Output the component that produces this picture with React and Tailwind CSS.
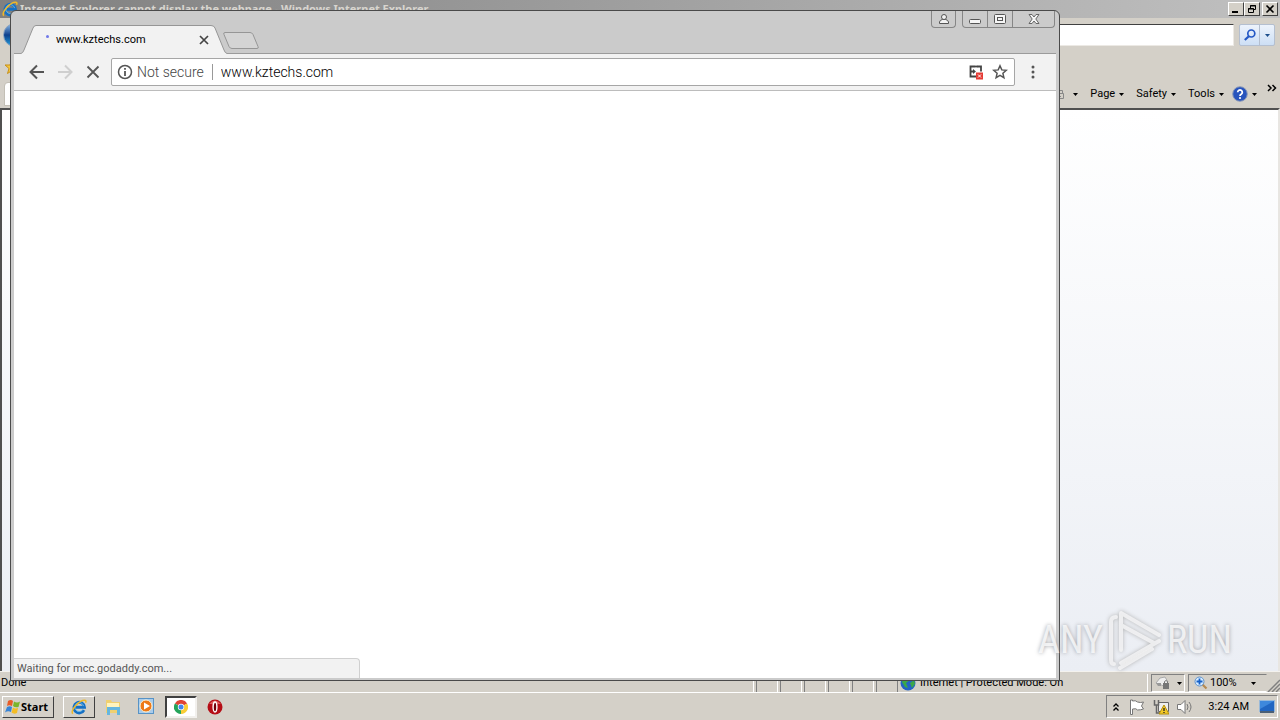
import React from "react";

const uiFont = "font-[Roboto,'Noto_Sans',sans-serif]";
const boldFont = "font-['Noto_Sans',Roboto,sans-serif]";

function Caret({ className = "" }) {
  return (
    <svg viewBox="0 0 5 3" className={"h-[3px] w-[5px] " + className} fill="currentColor" aria-hidden="true">
      <path d="M0 0h5L2.5 3z" />
    </svg>
  );
}

function IeLogo({ className = "" }) {
  return (
    <svg viewBox="0 0 18 18" className={className} fill="none" aria-hidden="true">
      <path d="M14.6 12.4A6 6 0 1 1 15.2 9.300H5" stroke="#1670c4" strokeWidth="3.2" />
      <path d="M13.6 11.6A5 5 0 1 1 14.2 8" stroke="#62bbf0" strokeWidth="1" />
      <path d="M2 16.6C-1 13 9 1 15.6 1.3c1.5.2 1.4 1.6.8 3" stroke="#f0b928" strokeWidth="1.7" />
    </svg>
  );
}

function CaptionButton({ label, children }) {
  return (
    <button
      type="button"
      aria-label={label}
      className="flex h-3.5 w-4 items-center justify-center border border-t-white border-l-white border-r-[#404040] border-b-[#404040] bg-[#d4d0c8]"
    >
      {children}
    </button>
  );
}

function IeTitleBar() {
  return (
    <header className="flex h-[18px] shrink-0 items-center bg-linear-to-r from-[#808080] to-[#c0c0c0] pr-0.5 pl-0.5">
      <IeLogo className="h-4 w-4" />
      <h1 className={"ml-0.5 flex-1 truncate text-[11px] font-bold text-[#d8d5cf] " + boldFont}>
        Internet Explorer cannot display the webpage - Windows Internet Explorer
      </h1>
      <div className="flex">
        <CaptionButton label="Minimize">
          <svg viewBox="0 0 10 10" className="h-2.5 w-2.5"><path d="M1 7h6v2H1z" /></svg>
        </CaptionButton>
        <CaptionButton label="Restore">
          <svg viewBox="0 0 10 10" className="h-2.5 w-2.5" fill="none" stroke="#000">
            <path d="M3.5 4V1.5h5v4H7M3 2h6M1.5 4.5h5v4h-5zM1 5h6" />
          </svg>
        </CaptionButton>
        <div className="w-0.5" />
        <CaptionButton label="Close">
          <svg viewBox="0 0 10 10" className="h-2.5 w-2.5" stroke="#000" strokeWidth="1.6">
            <path d="M1.5 1.5l7 7M8.5 1.5l-7 7" />
          </svg>
        </CaptionButton>
      </div>
    </header>
  );
}

function IeNavigation() {
  return (
    <div className="flex h-[34px] shrink-0 items-center pr-[5px]">
      <button type="button" aria-label="Back" className="ml-[3px] h-6 w-6 rounded-full border border-[#8aa2bf] bg-linear-to-b from-[#8dbbe8] via-[#0c3f8c] to-[#2ba0dd]" />
      <input
        type="text"
        aria-label="Address"
        className="ml-8 h-[22px] flex-1 border border-t-[#404040] border-l-[#404040] border-r-[#ece9e4] border-b-[#ece9e4] bg-white px-1 text-[11px]"
      />
      <div className="ml-[5px] flex h-[22px] w-9 rounded-xs border border-[#b4bfd0] bg-linear-to-b from-[#edf3fc] to-[#cddff5]">
        <button type="button" aria-label="Search" className="flex w-5 items-center justify-center border-r border-[#b4bfd0]">
          <svg viewBox="0 0 12 12" className="h-3 w-3" fill="none" stroke="#2458c5">
            <circle cx="7.3" cy="4.5" r="3.5" strokeWidth="1.7" />
            <path d="M4.8 7.2L.8 11" strokeWidth="2.2" />
          </svg>
        </button>
        <button type="button" aria-label="Search options" className="flex flex-1 items-center justify-center text-[#1c4e8c]">
          <Caret />
        </button>
      </div>
    </div>
  );
}

function MenuButton({ children }) {
  return (
    <button type="button" className="flex items-center gap-1 text-[11px] leading-4 text-black">
      {children}
      <Caret />
    </button>
  );
}

function IeCommandBars() {
  return (
    <>
      <div className="flex h-[30px] shrink-0 items-center pl-1">
        <svg viewBox="0 0 16 16" className="h-4 w-4 fill-[#f5c73e] stroke-[#c79019]" aria-hidden="true">
          <path d="M8 1l2 5h5l-4 3.500 1.500 5L8 11.500 3.500 14.500 5 9.500 1 6h5z" />
        </svg>
      </div>
      <div className="flex h-[26px] shrink-0 items-center justify-end pr-[3px] pb-0.5 pl-1">
        <div className="mr-auto h-full w-40 rounded-t-sm border border-[#c3bfb5] bg-linear-to-r from-white to-[#ece5c2]" />
        <nav aria-label="Command bar" className="flex items-center gap-3">
          <button type="button" aria-label="Print" className="flex items-center gap-2">
            <svg viewBox="0 0 12 12" className="h-3 w-3" fill="none" stroke="#888" aria-hidden="true">
              <path d="M2.500 5V2.500h7V5M1.500 5.500h9v5h-9zM4 8.500h4" />
            </svg>
            <Caret />
          </button>
          <MenuButton>Page</MenuButton>
          <MenuButton>Safety</MenuButton>
          <MenuButton>Tools</MenuButton>
          <button type="button" aria-label="Help" className="-ml-1 flex items-center gap-1">
            <svg viewBox="0 0 16 16" className="h-4 w-4" aria-hidden="true">
              <circle cx="8" cy="8" r="7.300" fill="#2854bd" stroke="#8d9bb8" />
              <path d="M5.700 6.300a2.300 2.300 0 1 1 3.500 2C8.200 8.900 8 9.100 8 10" fill="none" stroke="#fff" strokeWidth="1.800" />
              <circle cx="8" cy="12" r="1.100" fill="#fff" />
            </svg>
            <Caret />
          </button>
        </nav>
        <button type="button" aria-label="More commands" className="mb-3 ml-2.5 h-2 w-2.5">
          <svg viewBox="0 0 10 8" className="h-2 w-2.5" fill="none" stroke="#000" strokeWidth="1.500">
            <path d="M1 1l3 3-3 3M5.500 1l3 3-3 3" />
          </svg>
        </button>
      </div>
    </>
  );
}

function IeStatusBar() {
  return (
    <footer className="flex h-[21px] shrink-0 items-center border-t border-[#f4f2ee] bg-[#d4d0c8] pt-0.5 text-[11px] leading-4">
      <div className="flex-1 pl-px">Done</div>
      {[0, 1, 2, 3, 4, 5].map((n) => (
        <div key={n} className="h-full w-6 border-l border-white">
          <div className="ml-0.5 h-full border-l border-[#808080]" />
        </div>
      ))}
      <div className="flex h-full w-[251px] items-center gap-1 border-r border-l border-r-white border-l-[#808080] pl-0.5">
        <svg viewBox="0 0 16 16" className="h-4 w-4" aria-hidden="true">
          <circle cx="8" cy="8" r="7.500" fill="#2463c6" />
          <path d="M3 3l5-1 2 3-4 3 2 5-3-1-3-5zM10 8l4-3 1 4-3 4z" fill="#3ca848" />
        </svg>
        <span className="whitespace-nowrap">Internet | Protected Mode: On</span>
      </div>
      <button type="button" aria-label="Privacy report" className="ml-[3px] flex h-full w-[34px] items-center justify-center gap-1.5 border border-t-[#808080] border-l-[#808080] border-r-white border-b-white">
        <svg viewBox="0 0 16 16" className="h-4 w-4" aria-hidden="true">
          <path d="M1 8l4-5 5-1 3 5-4 4z" fill="#eee" stroke="#aaa" />
          <path d="M1 8h5v3H3z" fill="#999" />
          <path d="M8 8h6v6H8z" fill="#777" />
          <path d="M9.500 8V6.500q1.500-2 3 0V8" fill="none" stroke="#777" />
        </svg>
        <Caret />
      </button>
      <button type="button" className="ml-[3px] flex h-full w-[79px] items-center border border-t-[#808080] border-l-[#808080] border-r-transparent border-b-white pl-[5px]">
        <svg viewBox="0 0 14 14" className="mr-0.5 h-3.5 w-3.5" fill="none" aria-hidden="true">
          <path d="M8.500 8.500l4 4" stroke="#b58a50" strokeWidth="2.200" />
          <circle cx="5.500" cy="5.500" r="4.500" fill="#d5ebff" stroke="#5e91cc" />
          <path d="M5.500 2.500v6M2.500 5.500h6" stroke="#1560c8" strokeWidth="1.800" />
        </svg>
        <span>100%</span>
        <Caret className="mr-2.5 ml-auto" />
      </button>
      <svg viewBox="0 0 13 13" className="h-[13px] w-[13px] self-end" stroke="#808080" strokeWidth="1.500" aria-hidden="true">
        <path d="M1 13L13 1M5 13l8-8M9 13l4-4" />
      </svg>
    </footer>
  );
}

function ExplorerWindow() {
  return (
    <section aria-label="Internet Explorer" className="flex flex-1 flex-col bg-[#d4d0c8]">
      <IeTitleBar />
      <IeNavigation />
      <IeCommandBars />
      <div className="flex-1 border-t-2 border-r-2 border-l-2 border-t-[#505050] border-r-[#e8e6e2] border-l-[#505050] bg-linear-to-b from-white to-[#ebeef4]" />
      <IeStatusBar />
    </section>
  );
}

function ChromeCaption() {
  return (
    <div className="flex h-[17px] gap-1.5 pr-px">
      <button type="button" aria-label="Profile" className="flex w-[25px] items-center justify-center rounded-b border border-t-0 border-[#868686]">
        <svg viewBox="0 0 12 12" className="h-3 w-3" fill="#f2f2f2" stroke="#555">
          <path d="M1.500 10.500V9Q2 7 4.300 6.500h3.400Q10 7 10.500 9v1.500z" />
          <circle cx="6" cy="4" r="2.500" />
        </svg>
      </button>
      <div className="flex rounded-b border border-t-0 border-[#868686]">
        <button type="button" aria-label="Minimize" className="flex w-[25px] items-center justify-center border-r border-[#868686]">
          <svg viewBox="0 0 12 12" className="h-3 w-3" fill="#f5f5f5" stroke="#555"><rect x=".5" y="6.500" width="11" height="4" rx="1" /></svg>
        </button>
        <button type="button" aria-label="Maximize" className="flex w-[25px] items-center justify-center border-r border-[#868686]">
          <svg viewBox="0 0 12 12" className="h-3 w-3" fill="#f5f5f5" stroke="#555">
            <rect x=".5" y="1.500" width="11" height="9" rx="1" /><rect x="3.500" y="4.500" width="5" height="3" />
          </svg>
        </button>
        <button type="button" aria-label="Close" className="flex w-[41px] items-center justify-center">
          <svg viewBox="0 0 12 12" className="h-3 w-3" fill="#f5f5f5" stroke="#666">
            <path d="M1 1.500h3l2 2.500 2-2.500h3L7.800 6 11 10.500H8L6 8l-2 2.500H1L4.200 6z" />
          </svg>
        </button>
      </div>
    </div>
  );
}

function ChromeTabs() {
  return (
    <div className="flex h-[43px] items-start border-b border-[#9b9b9b] pl-[7px]">
      <div className="relative mt-3.5 flex h-[29px] w-[206px] items-center pr-[17px] pl-[26px]">
        <svg viewBox="0 0 206 30" className="absolute top-0 left-0 h-[30px] w-full" preserveAspectRatio="none" aria-hidden="true">
          <path d="M0 30V28.500Q2 27.500 3 25L12 3Q13 .5 15 .5H190Q193 .5 194 3L203 25Q204 28 206 28.500V30z" fill="#f2f2f2" />
          <path d="M0 28.500Q2 28 3 25L12 3Q13 .5 15 .5H190Q193 .5 194 3L203 25Q204 28 206 28.500" fill="none" stroke="#969696" />
        </svg>
        <span className="absolute top-2.5 left-[25px] h-[3px] w-[3px] rounded-full bg-[#7078e8]" />
        <span className="relative ml-[9px] flex-1 text-[11px] leading-4">www.kztechs.com</span>
        <button type="button" aria-label="Close tab" className="relative flex h-3 w-3 items-center justify-center">
          <svg viewBox="0 0 10 10" className="h-2.5 w-2.5" stroke="#444" strokeWidth="1.700"><path d="M1 1l8 8M9 1L1 9" /></svg>
        </button>
      </div>
      <button type="button" aria-label="New tab" className="mt-[21px] -ml-1 h-[18px] w-9">
        <svg viewBox="0 0 36 18" className="h-[18px] w-9" fill="#d4d4d4" stroke="#969696">
          <path d="M2 .5h25q2 0 3 2l5 12q1 2-1 2H9q-2 0-3-2L1 2.500Q0 .5 2 .5z" />
        </svg>
      </button>
      <div className="flex-1" />
      <ChromeCaption />
    </div>
  );
}

function ChromeToolbar() {
  return (
    <div className="flex h-[37px] items-center border-b border-[#bcbcbc] bg-[#f2f2f2] pl-[15px]">
      <div className="flex items-center gap-3">
        <button type="button" aria-label="Back">
          <svg viewBox="0 0 16 16" className="h-4 w-4" fill="none" stroke="#555" strokeWidth="2"><path d="M15 8H2M8 1.500L1.500 8 8 14.500" /></svg>
        </button>
        <button type="button" aria-label="Forward">
          <svg viewBox="0 0 16 16" className="h-4 w-4" fill="none" stroke="#cfcfcf" strokeWidth="2"><path d="M1 8h13M8 1.500L14.500 8 8 14.500" /></svg>
        </button>
        <button type="button" aria-label="Stop">
          <svg viewBox="0 0 16 16" className="h-4 w-4" fill="none" stroke="#555" strokeWidth="1.800"><path d="M2.500 2.500l11 11M13.500 2.500l-11 11" /></svg>
        </button>
      </div>
      <div className="ml-2.5 flex h-7 flex-1 items-center rounded-xs border border-[#a6a6a6] bg-white pr-1.5 pl-[5px]">
        <svg viewBox="0 0 16 16" className="h-4 w-4" fill="none" stroke="#555" aria-hidden="true">
          <circle cx="8" cy="8" r="6.500" strokeWidth="1.500" />
          <path d="M8 7v5M8 4v1.800" strokeWidth="1.800" />
        </svg>
        <span className="ml-1 text-[14px] leading-4 font-light text-[#444]">Not secure</span>
        <span className="ml-2 h-4 w-px bg-[#999]" />
        <input type="text" aria-label="Address bar" defaultValue="www.kztechs.com" className="ml-2 min-w-0 flex-1 bg-transparent text-[14px] leading-4 font-light text-black outline-none" />
        <svg viewBox="0 0 16 16" className="h-4 w-4" aria-hidden="true">
          <path d="M13 7.500V2.500H9.500M7 2.500H2.500v10H8M2 7.500h4" fill="none" stroke="#444" strokeWidth="1.800" />
          <path d="M5 5v5l3-2.500z" fill="#444" />
          <path d="M7 2.500h3" stroke="#444" strokeWidth="1.800" />
          <rect x="8" y="8.500" width="7" height="7" fill="#e53b35" />
          <path d="M10 10.500l3 3M13 10.500l-3 3" stroke="#fff" />
        </svg>
        <button type="button" aria-label="Bookmark this page" className="ml-2">
          <svg viewBox="0 0 16 16" className="h-4 w-4" fill="none" stroke="#555" strokeWidth="1.500">
            <path d="M8 1.800l1.800 4.100 4.500.4-3.400 3 1 4.400L8 11.400l-3.900 2.300 1-4.400-3.400-3 4.500-.4z" />
          </svg>
        </button>
      </div>
      <button type="button" aria-label="Menu" className="mr-[15px] ml-2.5 flex h-4 w-4 items-center justify-center">
        <svg viewBox="0 0 4 14" className="h-3.5 w-1" fill="#555"><circle cx="2" cy="2" r="1.500" /><circle cx="2" cy="7" r="1.500" /><circle cx="2" cy="12" r="1.500" /></svg>
      </button>
    </div>
  );
}

function ChromeWindow() {
  return (
    <section aria-label="Chrome" className="absolute top-2.5 right-[220px] bottom-[39px] left-2.5 flex flex-col rounded-t-md border border-[#4a4a4a] bg-[#cbcbcb] px-[3px] pb-0.5">
      <ChromeTabs />
      <ChromeToolbar />
      <main className="relative flex-1 bg-white">
        <div className="absolute bottom-0 left-0 flex h-5 w-[346px] items-center rounded-tr border border-b-0 border-l-0 border-[#d0d0d0] bg-[#f2f2f2] pl-[3px] text-[11px] leading-4 text-[#555]">
          Waiting for mcc.godaddy.com...
        </div>
      </main>
    </section>
  );
}

const raised = "border border-t-white border-l-white border-r-[#404040] border-b-[#404040]";

function Taskbar() {
  return (
    <footer className="flex h-7 shrink-0 items-center border-t border-white bg-[#d4d0c8] pr-0.5 pl-0.5 text-[11px] leading-4">
      <button type="button" className={"flex h-[22px] w-[52px] items-center font-bold " + boldFont + " " + raised}>
        <svg viewBox="0 0 16 16" className="ml-0.5 h-4 w-4" aria-hidden="true">
          <path d="M3 2q3-2 5 0L7 7Q4 5.500 2 7z" fill="#e85c27" />
          <path d="M9 2.500q3 2 6 0L13.500 8Q10 9 8 7z" fill="#7ab52c" />
          <path d="M2 8q3-1.500 5 0l-1 5q-3-1.500-6 .5z" fill="#3784d6" />
          <path d="M8 8.500q2 1.500 5 .5l-1 5q-3 1.500-5.500-.5z" fill="#f4bd25" />
        </svg>
        <span>Start</span>
      </button>
      <button type="button" aria-label="Internet Explorer" className={"ml-[9px] flex h-[22px] w-8 items-center justify-center " + raised}>
        <IeLogo className="h-4 w-4" />
      </button>
      <button type="button" aria-label="Windows Explorer" className="ml-2.5">
        <svg viewBox="0 0 16 16" className="h-4 w-4">
          <path d="M1 1h5l1 2h8v11H1z" fill="#efd071" />
          <path d="M2 4h12v4H2z" fill="#fff4bd" />
          <path d="M2 8h13v8h-3v-5H5v5H2z" fill="#65b6df" />
        </svg>
      </button>
      <button type="button" aria-label="Media Player" className="ml-[17px]">
        <svg viewBox="0 0 17 17" className="h-[17px] w-[17px]">
          <rect x=".5" y=".5" width="15" height="15" fill="#a9cceb" stroke="#5793c6" />
          <circle cx="8" cy="8" r="6" fill="#ed7918" stroke="#fff0ce" />
          <path d="M6 4.500v7L12 8z" fill="#fff" />
        </svg>
      </button>
      <button type="button" aria-label="Google Chrome" className="ml-2.5 flex h-[22px] w-8 items-center justify-center border-2 border-t-[#404040] border-l-[#404040] border-r-[#f2f0ed] border-b-[#f2f0ed] bg-white">
        <svg viewBox="0 0 14 14" className="h-3.5 w-3.5">
          <path d="M7 7L.9 3.500A7 7 0 0 1 13.100 3.500z" fill="#df4334" />
          <path d="M7 7L.9 3.500A7 7 0 0 0 7 14z" fill="#24a45a" />
          <path d="M7 7l6.100-3.500A7 7 0 0 1 7 14z" fill="#f9cd36" />
          <circle cx="7" cy="7" r="3.200" fill="#fff" /><circle cx="7" cy="7" r="2.500" fill="#4285ee" />
        </svg>
      </button>
      <button type="button" aria-label="Opera" className="ml-2.5">
        <svg viewBox="0 0 16 16" className="h-4 w-4">
          <circle cx="8" cy="8" r="7.500" fill="#b50d16" />
          <path d="M2 5Q8-2 14 5z" fill="#df5c5c" />
          <ellipse cx="8" cy="8" rx="1.900" ry="5" fill="#70000a" stroke="#fff" strokeWidth="1.400" />
        </svg>
      </button>
      <div className="ml-auto flex h-[23px] w-[172px] items-center border border-t-[#808080] border-l-[#808080] border-r-white border-b-white pr-0.5 pl-1.5">
        <button type="button" aria-label="Show hidden icons">
          <svg viewBox="0 0 6 8" className="h-2 w-1.5" fill="none" stroke="#000" strokeWidth="1.300"><path d="M.5 3.500L3 1l2.500 2.500M.5 7.500L3 5l2.500 2.500" /></svg>
        </button>
        <svg viewBox="0 0 16 16" className="ml-2.5 h-4 w-4" fill="#fff" stroke="#777" aria-hidden="true">
          <path d="M1.500 1v14.500h2V10q4-1 5 1 3 0 6-1l-2-3 2-4q-3 1-6 0-2-2-5-1V1z" />
        </svg>
        <svg viewBox="0 0 16 16" className="ml-2 h-4 w-4" aria-hidden="true">
          <path d="M5.500 3.500h10v9h-10z" fill="#eee" stroke="#666" />
          <path d="M1.500 1v5h4V1M3.500 6v8H7" fill="none" stroke="#666" strokeWidth="1.500" />
          <path d="M11 6l5 9H6z" fill="#f3c928" stroke="#b48f0b" />
          <path d="M11 9v3M11 13v1" stroke="#222" strokeWidth="1.300" />
        </svg>
        <svg viewBox="0 0 16 16" className="ml-2 h-4 w-4" fill="#fff" stroke="#777" aria-hidden="true">
          <path d="M.5 5.500H4l4-4v13l-4-4H.5z" />
          <path d="M10 5q2 3 0 6M12 3q4 5 0 10" fill="none" />
        </svg>
        <time className="mr-2.5 ml-auto">3:24 AM</time>
        <svg viewBox="0 0 16 13" className="h-[13px] w-4" aria-hidden="true">
          <rect x=".5" y=".5" width="15" height="11" fill="#2166c2" stroke="#99b9d9" />
          <path d="M1 1h14L1 9z" fill="#3e88dc" />
          <path d="M1 12h14" stroke="#4b5f75" strokeWidth="2" />
        </svg>
      </div>
    </footer>
  );
}

function Watermark() {
  return (
    <div className="pointer-events-none absolute right-12 bottom-12 flex h-16 items-center gap-1 font-['Roboto_Condensed','Liberation_Sans',sans-serif] text-[38px] leading-none font-normal text-white/75 [text-shadow:0_0_4px_#a0a2a8]">
      <span>ANY</span>
      <svg viewBox="0 0 56 64" className="h-16 w-14 drop-shadow-[0_0_2px_#aaa]" fill="none" stroke="#f4f4f6" strokeOpacity=".85" strokeLinejoin="round" strokeLinecap="round" aria-hidden="true">
        <path d="M14 42V5l38 22M14 17l33 18M52 33L14 55" strokeWidth="4" />
        <path d="M9 9Q4 9 4 14v38q0 4 3 4M13 60l32-19" strokeWidth="4" />
      </svg>
      <span>RUN</span>
    </div>
  );
}

export default function App() {
  return (
    <div className={"relative flex min-h-screen flex-col overflow-hidden text-black " + uiFont}>
      <ExplorerWindow />
      <Taskbar />
      <ChromeWindow />
      <Watermark />
    </div>
  );
}
